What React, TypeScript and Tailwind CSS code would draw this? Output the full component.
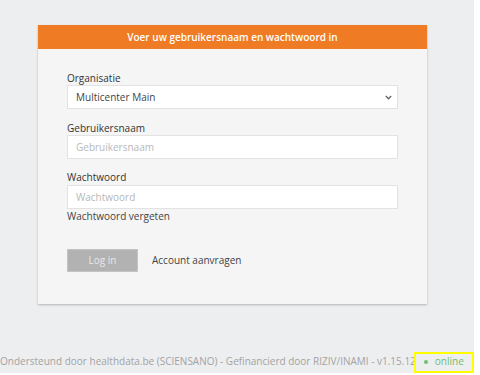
import React from "react";

export default function App() {
  return (
    <div className="relative w-[480px] h-[375px] bg-white" style={{ fontFamily: '"Open Sans", sans-serif' }}>
      <div className="w-[474px] h-[373px] bg-[#edeef0] flex flex-col">
        <div className="ml-[38px] mt-[25px] w-[389px] bg-[#f5f5f5] shadow-[0_1px_2px_rgba(0,0,0,0.25)]">
          <div className="h-[24px] bg-[#ef7b24] flex items-center justify-center text-white text-[10px] font-semibold">
            Voer uw gebruikersnaam en wachtwoord in
          </div>
          <div className="px-[29px] pt-[22px] pb-[32px] text-[#333] text-[10px]">
            <div className="h-[14px] leading-[14px]">Organisatie</div>
            <div className="h-[24px] bg-white border border-[#e2e2e2] flex items-center justify-between pl-[8px] pr-[5px] text-[#444]">
              <span>Multicenter Main</span>
              <svg width="7" height="5" viewBox="0 0 7 5" fill="none" stroke="#666" strokeWidth="1.3"><path d="M0.8 1 L3.5 3.8 L6.2 1" /></svg>
            </div>
            <div className="h-[14px] leading-[14px] mt-[12px]">Gebruikersnaam</div>
            <div className="h-[24px] bg-white border border-[#e2e2e2] flex items-center px-[8px] text-[#b8b8b8]">
              Gebruikersnaam
            </div>
            <div className="h-[14px] leading-[14px] mt-[11px] mb-[1px]">Wachtwoord</div>
            <div className="h-[24px] bg-white border border-[#e2e2e2] flex items-center px-[8px] text-[#b8b8b8]">
              Wachtwoord
            </div>
            <div className="h-[14px] leading-[14px] text-[#444]">Wachtwoord vergeten</div>
            <div className="mt-[26px] flex items-center">
              <div className="w-[71px] h-[23px] bg-[#b2b2b2] border border-[#c4c4c4] text-[#e8e8e8] flex items-center justify-center">Log in</div>
              <div className="ml-[14px] text-[#444]">Account aanvragen</div>
            </div>
          </div>
        </div>
        <div className="mt-auto mb-[4px] flex items-center text-[10px] text-[#a3a3a3] whitespace-nowrap">
          <span>Ondersteund door healthdata.be (SCIENSANO) - Gefinancierd door RIZIV/INAMI - v1.15.12</span>
          <span className="ml-[8px] w-[4px] h-[4px] rounded-full bg-[#6fbf6f]"></span>
          <span className="ml-[7px] text-[#6fbf6f]">online</span>
        </div>
      </div>
      <div className="absolute left-[414px] top-[352px] w-[60px] h-[21px] border-2 border-[#ffff00]"></div>
    </div>
  );
}
